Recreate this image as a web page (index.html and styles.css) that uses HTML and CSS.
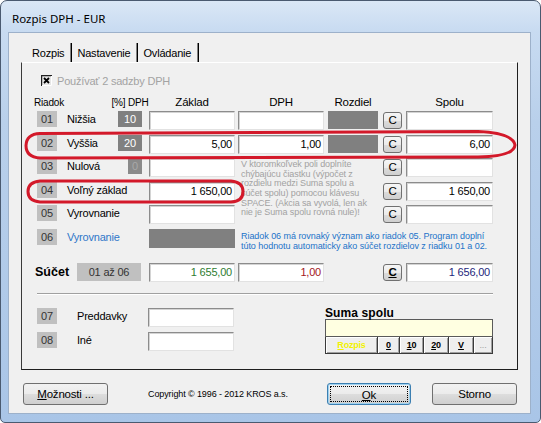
FILE: index.html
```html
<!DOCTYPE html>
<html lang="sk">
<head>
<meta charset="utf-8">
<title>Rozpis DPH - EUR</title>
<link rel="stylesheet" href="styles.css">
</head>
<body>
<div class="window">
  <div class="titlebar"><span class="title">Rozpis DPH - EUR</span></div>
  <div class="client">
    <div class="tabs">
      <div class="tab first">Rozpis</div>
      <div class="tab">Nastavenie</div>
      <div class="tab">Ovládanie</div>
    </div>
    <div class="panel">
      <div class="check">
        <svg class="cb" width="11" height="11" viewBox="0 0 11 11">
          <rect x="0" y="0" width="11" height="11" fill="#e6e6e6"/>
          <path d="M0.5 11V0.5H11" fill="none" stroke="#202020" stroke-width="1.4"/>
          <path d="M10.5 1V10.5H1" fill="none" stroke="#ffffff" stroke-width="1"/>
          <path d="M3 3L8 8M8 3L3 8" stroke="#000" stroke-width="1.8"/>
        </svg>
        <span>Používať 2 sadzby DPH</span>
      </div>

      <div class="grid head">
        <div class="h riadok">Riadok</div>
        <div class="h pcth"><span>[%] DPH</span></div>
        <div class="h c-zak"><span>Základ</span></div>
        <div class="h c-dph"><span>DPH</span></div>
        <div class="h c-roz"><span>Rozdiel</span></div>
        <div class="h c-spo"><span>Spolu</span></div>
      </div>

      <div class="grid rows">
        <div class="num r1">01</div><div class="lbl r1">Nižšia</div><div class="pct r1">10</div>
        <div class="inp c-zak r1"></div><div class="inp c-dph r1"></div><div class="gray c-roz r1"></div>
        <div class="cbtn r1">C</div><div class="inp c-spo r1"></div>

        <div class="num r2">02</div><div class="lbl r2">Vyššia</div><div class="pct r2">20</div>
        <div class="inp c-zak r2">5,00</div><div class="inp c-dph r2">1,00</div><div class="gray c-roz r2"></div>
        <div class="cbtn r2">C</div><div class="inp c-spo r2">6,00</div>

        <div class="num r3">03</div><div class="lbl r3">Nulová</div><div class="pct dis r3">0</div>
        <div class="inp c-zak r3"></div>
        <div class="note">V ktoromkoľvek poli doplníte<br>chýbajúcu čiastku (výpočet z<br>rozdielu medzi Suma spolu a<br>súčet spolu) pomocou klávesu<br>SPACE. (Akcia sa vyvolá, len ak<br>nie je Suma spolu rovná nule)!</div>
        <div class="cbtn r3">C</div><div class="inp c-spo r3"></div>

        <div class="num r4">04</div><div class="lbl r4">Voľný základ</div>
        <div class="inp c-zak r4">1 650,00</div>
        <div class="cbtn r4">C</div><div class="inp c-spo r4">1 650,00</div>

        <div class="num r5">05</div><div class="lbl r5">Vyrovnanie</div>
        <div class="inp c-zak r5"></div>
        <div class="cbtn r5">C</div><div class="inp c-spo r5"></div>

        <div class="num r6">06</div><div class="lbl blue r6">Vyrovnanie</div>
        <div class="gray c-zak tall r6"></div>
        <div class="bluenote">Riadok 06 má rovnaký význam ako riadok 05. Program doplní<br>túto hodnotu automaticky ako súčet rozdielov z riadku 01 a 02.</div>
      </div>

      <div class="grid sum">
        <div class="sumlbl"><b>Súčet</b><span class="sumbox">01 až 06</span></div>
        <div class="inp c-zak green">1 655,00</div>
        <div class="inp c-dph red">1,00</div>
        <div class="cbtn bold"><u>C</u></div>
        <div class="inp c-spo navy">1 656,00</div>
      </div>

      <div class="sep"></div>

      <div class="lower">
        <div class="extras">
          <div class="xrow"><div class="num">07</div><div class="xlbl">Preddavky</div><div class="inp xinp"></div></div>
          <div class="xrow"><div class="num">08</div><div class="xlbl">Iné</div><div class="inp xinp"></div></div>
        </div>
        <div class="suma">
          <div class="suma-title">Suma spolu</div>
          <div class="suma-box"></div>
          <div class="suma-btns">
            <div class="sb w1 yellow"><u>R</u>ozpis</div>
            <div class="sb w2"><u>0</u></div>
            <div class="sb w3"><u>1</u>0</div>
            <div class="sb w4"><u>2</u>0</div>
            <div class="sb w5"><u>V</u></div>
            <div class="sb w6 dots">...</div>
          </div>
        </div>
      </div>
    </div>

    <div class="footer">
      <div class="btn b-opt"><u>M</u>ožnosti ...</div>
      <div class="copy">Copyright © 1996 - 2012 KROS a.s.</div>
      <div class="spacer"></div>
      <div class="btn b-ok"><span class="focus"><u>O</u>k</span></div>
      <div class="btn b-cancel">Storno</div>
    </div>
  </div>

  <svg class="annot" width="541" height="423" viewBox="0 0 541 423">
    <path d="M40 133.5 L478 131.5 Q513 133 515 145 Q514 156.5 478 157 L40 158 Q26 157 26 145.5 Q26.5 134 40 133.5 Z" fill="none" stroke="#d3192a" stroke-width="3"/>
    <path d="M40 181 L231 181 Q243 182 243 191.5 Q243 201.5 231 202 L40 202 Q28 201 28 191.5 Q28 182 40 181 Z" fill="none" stroke="#d3192a" stroke-width="3"/>
  </svg>
</div>
</body>
</html>
```

FILE: styles.css
```css
html, body {
  margin: 0;
  padding: 0;
  background: #ffffff;
}

body {
  font-family: "Liberation Sans", Arial, sans-serif;
  font-size: 11px;
  color: #000;
  letter-spacing: -0.2px;
}

.window {
  position: relative;
  box-sizing: border-box;
  width: 541px;
  height: 423px;
  border: 1px solid #4a5a70;
  border-radius: 7px 7px 5px 5px;
  padding: 0 9px 8px 7px;
  background: linear-gradient(180deg, #dae7f6 0px, #c8dbf1 30px, #b9d0eb 120px, #a9c5e7 423px);
  display: flex;
  flex-direction: column;
}

.titlebar {
  height: 31px;
  flex: none;
  display: flex;
  align-items: center;
  padding: 3px 0 0 4px;
  box-sizing: border-box;
}

.title {
  font-family: "Noto Sans", "Open Sans", sans-serif;
  font-size: 11.5px;
  letter-spacing: 0;
  color: #000;
}

.client {
  flex: 1;
  background: #f0f0f0;
  border: 1px solid #9db1ca;
  padding: 10px 0 0 12px;
}

/* tabs */
.tabs {
  display: flex;
  height: 19px;
}

.tab {
  padding: 3px 7px 0 5px;
  line-height: 15px;
  border-right: 1px solid #000;
  box-shadow: inset -1px 0 0 #808080;
}

.tab.first {
  padding-left: 11px;
}

.panel {
  box-sizing: border-box;
  width: 497px;
  height: 308px;
  border-style: solid;
  border-width: 1px;
  border-color: #ffffff #1e1e1e #1e1e1e #3a3a3a;
  padding: 12px 0 0 15px;
}

.check {
  display: flex;
  align-items: center;
  gap: 5px;
  margin-left: 4px;
  height: 11px;
  color: #a3a3a3;
}

.cb {
  display: block;
  flex: none;
}

/* table grid */
.grid {
  display: grid;
  width: 456px;
  grid-template-columns: 20px 61px 24px 93px 89px 54px 24px 91px;
}

.head {
  margin-top: 10px;
  height: 13px;
  align-items: center;
}

.h {
  display: flex;
  justify-content: center;
  white-space: nowrap;
  line-height: 13px;
}

.riadok {
  grid-column: 1 / 3;
  justify-content: flex-start;
  margin-left: -3px;
  font-size: 10px;
}

.pcth {
  grid-column: 3;
  font-size: 10px;
}

.head .c-zak { grid-column: 4; width: 86px; justify-self: end; font-size: 11.5px; }
.head .c-dph { grid-column: 5; width: 86px; justify-self: end; font-size: 11.5px; }
.head .c-roz { grid-column: 6; width: 50px; justify-self: end; font-size: 11.5px; }
.head .c-spo { grid-column: 7 / 9; width: 87px; justify-self: end; font-size: 11.5px; }

.rows {
  margin-top: 2px;
  grid-template-rows: repeat(6, 19px);
  row-gap: 4.6px;
}

.r1 { grid-row: 1; }
.r2 { grid-row: 2; }
.r3 { grid-row: 3; }
.r4 { grid-row: 4; }
.r5 { grid-row: 5; }
.r6 { grid-row: 6; }

.num {
  grid-column: 1;
  width: 20px;
  height: 16px;
  line-height: 16px;
  text-align: center;
  background: #c0c0c0;
  color: #333;
}

.lbl {
  grid-column: 2;
  padding-left: 10px;
  line-height: 16px;
  white-space: nowrap;
}

.lbl.blue {
  color: #2f77c9;
}

.pct {
  grid-column: 3;
  justify-self: end;
  width: 24px;
  height: 16px;
  line-height: 16px;
  text-align: center;
  background: #808080;
  color: #fff;
}

.pct.dis {
  width: 14px;
  background: #8a8a8a;
  color: #a8a8a8;
}

.inp {
  box-sizing: border-box;
  justify-self: end;
  height: 19px;
  background: #fff;
  border-style: solid;
  border-width: 1px;
  border-color: #8c8c8c #e2e2e2 #e2e2e2 #8c8c8c;
  box-shadow: inset 1px 1px 0 #d4d4d4;
  text-align: right;
  padding-right: 2px;
  line-height: 17px;
  white-space: nowrap;
}

.c-zak { grid-column: 4; width: 86px; }
.c-dph { grid-column: 5; width: 86px; }
.c-roz { grid-column: 6; width: 50px; }
.c-spo { grid-column: 8; width: 87px; }

.gray {
  justify-self: end;
  height: 18px;
  background: #808080;
}

.gray.tall {
  height: 19px;
}

.cbtn {
  grid-column: 7;
  justify-self: end;
  box-sizing: border-box;
  width: 19px;
  height: 17px;
  margin-top: 1px;
  border: 1px solid #707070;
  border-radius: 3px;
  background: linear-gradient(180deg, #f6f6f6 0%, #ebebeb 50%, #dcdcdc 51%, #cfcfcf 100%);
  text-align: center;
  line-height: 15px;
  font-size: 11.5px;
}

.cbtn.bold {
  font-weight: bold;
}

.note {
  grid-column: 5 / 7;
  grid-row: 3 / 6;
  padding: 2px 0 0 6px;
  font-size: 9px;
  line-height: 9.6px;
  letter-spacing: -0.1px;
  color: #a2a2a2;
  white-space: nowrap;
}

.bluenote {
  grid-column: 5 / 9;
  grid-row: 6;
  padding: 2px 0 0 6px;
  font-size: 9px;
  line-height: 10px;
  letter-spacing: -0.05px;
  color: #2273c9;
  white-space: nowrap;
}

/* sum row */
.sum {
  margin-top: 15px;
  height: 19px;
}

.sumlbl {
  grid-column: 1 / 4;
  display: flex;
  align-items: center;
  margin-left: -2px;
}

.sumlbl b {
  font-size: 12.5px;
  letter-spacing: 0;
}

.sumbox {
  margin-left: auto;
  margin-right: 1px;
  width: 64px;
  height: 18px;
  line-height: 18px;
  background: #c0c0c0;
  color: #333;
  text-align: center;
}

.green { color: #2e7d32; }
.red { color: #a3161d; }
.navy { color: #1d1f7c; }

.sep {
  width: 456px;
  margin-top: 11px;
  border-top: 1px solid #a0a0a0;
  border-bottom: 1px solid #ffffff;
}

/* lower */
.lower {
  display: flex;
  width: 456px;
  margin-top: 13px;
}

.extras {
  display: flex;
  flex-direction: column;
  gap: 5px;
}

.xrow {
  display: flex;
  align-items: flex-start;
  height: 19px;
}

.xlbl {
  width: 91px;
  box-sizing: border-box;
  padding-left: 20px;
  line-height: 16px;
}

.xinp {
  width: 86px;
}

.suma {
  margin-left: auto;
  width: 168px;
  margin-top: -1px;
}

.suma-title {
  font-weight: bold;
  font-size: 12px;
  letter-spacing: 0.1px;
  line-height: 12px;
}

.suma-box {
  box-sizing: border-box;
  height: 18px;
  background: #ffffe1;
  border: 1px solid #5a5a5a;
}

.suma-btns {
  display: flex;
  box-sizing: border-box;
  height: 17px;
  border: 1px solid #3a3a3a;
  border-top: none;
}

.sb {
  box-sizing: border-box;
  height: 16px;
  background: #eeeeee;
  border-right: 1px solid #3a3a3a;
  box-shadow: inset 1px 1px 0 #ffffff, inset -1px -1px 0 #a0a0a0;
  text-align: center;
  line-height: 16px;
  font-size: 9px;
  font-weight: bold;
}

.sb:last-child { border-right: none; }
.w1 { width: 52px; }
.w2 { width: 22px; }
.w3 { width: 24px; }
.w4 { width: 25px; }
.w5 { width: 25px; }
.w6 { flex: 1; }

.yellow { color: #f2f200; }
.dots { color: #a0a0a0; font-weight: normal; }

/* footer */
.footer {
  display: flex;
  align-items: center;
  width: 497px;
  margin-top: 13px;
  height: 22px;
}

.btn {
  box-sizing: border-box;
  height: 22px;
  border: 1px solid #707070;
  border-radius: 3px;
  background: linear-gradient(180deg, #f2f2f2 0%, #ebebeb 50%, #dddddd 51%, #cfcfcf 100%);
  text-align: center;
  line-height: 20px;
  font-size: 11.5px;
}

.b-opt {
  width: 85px;
  margin-left: 2px;
}

.copy {
  margin-left: 40px;
  font-size: 9px;
  letter-spacing: -0.1px;
}

.spacer { flex: 1; }

.b-ok {
  width: 84px;
  border-color: #3c7fb1;
  box-shadow: inset 0 0 0 1px #9fd2f0;
  padding: 2px;
  line-height: 16px;
}

.focus {
  display: block;
  height: 16px;
  box-sizing: border-box;
  border: 1px dotted #000;
}

.b-cancel {
  width: 85px;
  margin-left: 21px;
  margin-right: 1px;
}

.annot {
  position: absolute;
  left: -1px;
  top: -1px;
  pointer-events: none;
}
```
